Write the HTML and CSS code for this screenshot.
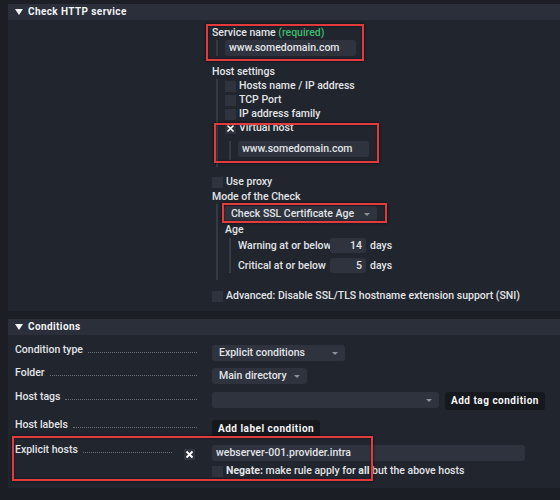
FILE: index.html
```html
<!DOCTYPE html>
<html lang="en">
<head>
    <meta charset="UTF-8">
    <title>Check HTTP service</title>
    <link rel="stylesheet" href="styles.css">
</head>
<body>

<div class="panel first">
    <div class="panel-head"><span class="tri"></span>Check HTTP service</div>
    <div class="panel-body form-col">
        <div class="label">Service name <span class="req">(required)</span></div>
        <div class="nested svc">
            <div class="input wide">www.somedomain.com</div>
        </div>

        <div class="label host-label">Host settings</div>
        <div class="nested host-list">
            <div class="check-row"><span class="cb"></span><span>Hosts name / IP address</span></div>
            <div class="check-row"><span class="cb"></span><span>TCP Port</span></div>
            <div class="check-row"><span class="cb"></span><span>IP address family</span></div>
            <div class="check-row">
                <span class="cb checked"><svg width="11" height="11" viewBox="0 0 11 11"><path d="M2.5 2.5 L8.5 8.5 M8.5 2.5 L2.5 8.5" stroke="#ffffff" stroke-width="1.7" fill="none"/></svg></span>
                <span>Virtual host</span>
            </div>
            <div class="nested vhost">
                <div class="input wide">www.somedomain.com</div>
            </div>
        </div>

        <div class="check-row proxy"><span class="cb"></span><span>Use proxy</span></div>
        <div class="label mode-label">Mode of the Check</div>
        <div class="nested mode">
            <div class="select mode-select">Check SSL Certificate Age<span class="arrow"></span></div>
            <div class="label age">Age</div>
            <div class="nested ages">
                <div class="age-row">
                    <span class="age-label">Warning at or below</span>
                    <span class="input num">14</span>
                    <span>days</span>
                </div>
                <div class="age-row">
                    <span class="age-label">Critical at or below</span>
                    <span class="input num">5</span>
                    <span>days</span>
                </div>
            </div>
        </div>
        <div class="check-row adv"><span class="cb"></span><span>Advanced: Disable SSL/TLS hostname extension support (SNI)</span></div>
    </div>
</div>

<div class="panel second">
    <div class="panel-head"><span class="tri"></span>Conditions</div>
    <div class="panel-body cond">
        <div class="cond-row r1">
            <div class="cond-label"><span>Condition type</span><span class="dots"></span></div>
            <div class="select ct">Explicit conditions<span class="arrow"></span></div>
        </div>
        <div class="cond-row r2">
            <div class="cond-label"><span>Folder</span><span class="dots"></span></div>
            <div class="select folder">Main directory<span class="arrow"></span></div>
        </div>
        <div class="cond-row r3">
            <div class="cond-label"><span>Host tags</span><span class="dots"></span></div>
            <div class="select tags"><span class="arrow"></span></div>
            <div class="btn">Add tag condition</div>
        </div>
        <div class="cond-row r4">
            <div class="cond-label"><span>Host labels</span><span class="dots"></span></div>
            <div class="btn">Add label condition</div>
        </div>
        <div class="cond-row r5">
            <div class="cond-label">
                <span>Explicit hosts</span><span class="dots short"></span>
                <span class="xbox"><svg width="11" height="11" viewBox="0 0 11 11"><path d="M2.5 2.5 L8.5 8.5 M8.5 2.5 L2.5 8.5" stroke="#ffffff" stroke-width="1.8" fill="none"/></svg></span>
            </div>
            <div class="hosts">
                <div class="input hosts-input">webserver-001.provider.intra</div>
                <div class="check-row negate"><span class="cb"></span><span><b>Negate:</b> make rule apply for <b>all</b> but the above hosts</span></div>
            </div>
        </div>
    </div>
</div>

<!-- markierungen -->
<div class="mark m1"></div>
<div class="mark m2"></div>
<div class="mark m3"></div>
<div class="mark m4"></div>

</body>
</html>
```

FILE: styles.css
```css
/* allgemein */
body {
    margin: 0;
    background-color: #1b1e24;
    font-family: Roboto, "Liberation Sans", sans-serif;
    font-size: 10.5px;
    font-weight: 500;
    color: #e2e4e8;
    overflow: hidden;
    height: 500px;
    position: relative;
}
.panel {
    margin-left: 8px;
    width: 560px;
}
.panel.first {
    margin-top: 4px;
}
.panel.second {
    margin-top: 8px;
}
.panel-head {
    height: 16px;
    line-height: 16px;
    background-color: #2a2f39;
    padding-left: 7px;
    font-size: 10px;
    font-weight: bold;
    letter-spacing: 0.4px;
    color: #f2f3f5;
    display: flex;
    align-items: center;
}
.tri {
    width: 0;
    height: 0;
    border-left: 4px solid transparent;
    border-right: 4px solid transparent;
    border-top: 6px solid #f2f3f5;
    margin-right: 5px;
}
.panel-body {
    background-color: #21252d;
}

/* formular oben */
.form-col {
    padding: 6px 0 8px 204px;
}
.label {
    line-height: 14px;
    height: 14px;
}
.req {
    color: #3dbb6a;
}
.nested {
    margin-left: 4px;
    border-left: 2px solid #353a44;
    padding-left: 7px;
}
.input {
    background-color: #2e333d;
    border-radius: 3px;
    height: 16px;
    line-height: 16px;
    padding: 0 4px;
    box-sizing: border-box;
    white-space: nowrap;
}
.input.wide {
    width: 131px;
}
.host-label {
    margin-top: 9px;
}
.host-list {
    padding-bottom: 7px;
}
.check-row {
    display: flex;
    align-items: center;
    height: 14px;
    line-height: 14px;
    white-space: nowrap;
}
.cb {
    width: 11px;
    height: 11px;
    background-color: #2e333d;
    margin-right: 3px;
    flex-shrink: 0;
    display: flex;
}
.vhost {
    margin-top: 6px;
    padding-bottom: 3px;
}
.proxy {
    margin-top: 8px;
}
.mode-label {
    margin-top: 1px;
}
.mode {
    padding-top: 2px;
    padding-bottom: 7px;
    margin-bottom: 9px;
}
.select {
    position: relative;
    background-color: #2e333d;
    border-radius: 3px;
    height: 16px;
    line-height: 16px;
    padding-left: 7px;
    box-sizing: border-box;
    white-space: nowrap;
}
.arrow {
    position: absolute;
    right: 7px;
    top: 7px;
    width: 0;
    height: 0;
    border-left: 3px solid transparent;
    border-right: 3px solid transparent;
    border-top: 3px solid #8c919a;
}
.mode-select {
    width: 153px;
    margin-left: -1px;
}
.age {
    margin-top: 1px;
}
.ages {
    margin-top: 1px;
}
.age-row {
    display: flex;
    align-items: center;
    height: 15px;
    margin-bottom: 5px;
    white-space: nowrap;
}
.age-row:last-child {
    margin-bottom: 0;
}
.age-label {
    width: 92px;
}
.input.num {
    width: 36px;
    height: 15px;
    line-height: 15px;
    text-align: right;
    margin-right: 4px;
}

/* bedingungen */
.cond {
    padding: 10px 0 9px 7px;
    height: 134px;
}
.cond-row {
    display: flex;
    align-items: flex-start;
}
.cond-label {
    width: 197px;
    display: flex;
    align-items: baseline;
    line-height: 14px;
    margin-top: -2px;
    white-space: nowrap;
}
.dots {
    flex: 1;
    border-bottom: 1px dotted #6a6f78;
    margin: 0 15px 0 5px;
}
.dots.short {
    margin-right: 12px;
}
.xbox {
    margin-right: 17px;
    width: 11px;
    height: 11px;
    background-color: #30353f;
    display: flex;
    align-self: center;
    position: relative;
    top: 4px;
}
.r2 {
    margin-top: 7px;
}
.r3 {
    margin-top: 8px;
}
.r4 {
    margin-top: 10px;
}
.r5 {
    margin-top: 7px;
}
.ct {
    width: 133px;
}
.folder {
    width: 95px;
}
.tags {
    width: 227px;
}
.btn {
    background-color: #15181d;
    border-radius: 3px;
    height: 18px;
    line-height: 18px;
    padding: 0 6px;
    font-size: 10px;
    font-weight: bold;
    letter-spacing: 0.5px;
    color: #f5f6f8;
    margin-left: 6px;
    white-space: nowrap;
}
.r4 .btn {
    margin-left: 0;
}
.hosts-input {
    width: 313px;
}
.negate {
    margin-top: 3px;
}

/* rote markierungen */
.mark {
    position: absolute;
    border: 2px solid #e33b3d;
    box-shadow: 0 0 3px rgba(0, 0, 0, 0.7), inset 0 0 2px rgba(0, 0, 0, 0.6);
    box-sizing: border-box;
}
.m1 {
    left: 206px;
    top: 24px;
    width: 158px;
    height: 37px;
}
.m2 {
    left: 214px;
    top: 123px;
    width: 165px;
    height: 40px;
}
.m3 {
    left: 222px;
    top: 203px;
    width: 165px;
    height: 20px;
}
.m4 {
    left: 12px;
    top: 436px;
    width: 361px;
    height: 45px;
}
```
